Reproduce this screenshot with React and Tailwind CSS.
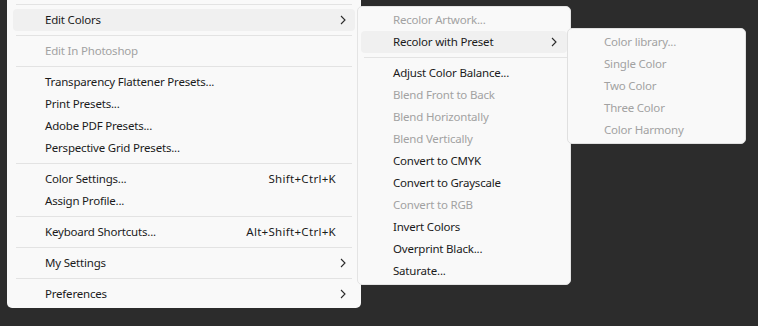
import React from "react";

const mainItems = [
  { sep: true },
  { label: "Edit Colors", sub: true, active: true },
  { sep: true },
  { label: "Edit In Photoshop", disabled: true },
  { sep: true },
  { label: "Transparency Flattener Presets..." },
  { label: "Print Presets..." },
  { label: "Adobe PDF Presets..." },
  { label: "Perspective Grid Presets..." },
  { sep: true },
  { label: "Color Settings...", shortcut: "Shift+Ctrl+K" },
  { label: "Assign Profile..." },
  { sep: true },
  { label: "Keyboard Shortcuts...", shortcut: "Alt+Shift+Ctrl+K" },
  { sep: true },
  { label: "My Settings", sub: true },
  { sep: true },
  { label: "Preferences", sub: true },
];

const colorItems = [
  { label: "Recolor Artwork...", disabled: true },
  { label: "Recolor with Preset", sub: true, active: true },
  { sep: true },
  { label: "Adjust Color Balance..." },
  { label: "Blend Front to Back", disabled: true },
  { label: "Blend Horizontally", disabled: true },
  { label: "Blend Vertically", disabled: true },
  { label: "Convert to CMYK" },
  { label: "Convert to Grayscale" },
  { label: "Convert to RGB", disabled: true },
  { label: "Invert Colors" },
  { label: "Overprint Black..." },
  { label: "Saturate..." },
];

const presetItems = [
  { label: "Color library...", disabled: true },
  { label: "Single Color", disabled: true },
  { label: "Two Color", disabled: true },
  { label: "Three Color", disabled: true },
  { label: "Color Harmony", disabled: true },
];

const Chevron = () => (
  <svg width="6" height="10" viewBox="0 0 6 10" className="shrink-0">
    <polyline points="1,1 5,5 1,9" fill="none" stroke="#2a2a2a" strokeWidth="1.1" />
  </svg>
);

const MenuList = ({ items, indent = "pl-[32px]", right = "pr-[19px]", chevronPad = "pr-[9px]", sepClass = "mx-[3px]" }) => (
  <>
    {items.map((item, i) =>
      item.sep ? (
        <div key={i} className="h-[9px] flex items-center">
          <div className={`h-px flex-1 bg-[#e3e3e3] ${sepClass}`} />
        </div>
      ) : (
        <div
          key={i}
          className={`h-[22px] flex items-center rounded-[4px] ${indent} ${
            item.sub ? chevronPad : right
          } ${item.active ? "bg-[#f0f0f0]" : ""} ${
            item.disabled ? "text-[#a2a2a2]" : "text-[#1b1b1b]"
          }`}
        >
          <span className="flex-1 whitespace-nowrap">{item.label}</span>
          {item.shortcut && (
            <span className="whitespace-nowrap tracking-[0.3px]">{item.shortcut}</span>
          )}
          {item.sub && <Chevron />}
        </div>
      )
    )}
  </>
);

export default function App() {
  return (
    <div
      className="relative w-[758px] h-[326px] overflow-hidden bg-[#2c2c2c] text-[11.5px] tracking-[-0.2px]"
      style={{ fontFamily: '"Noto Sans", "Open Sans", sans-serif' }}
    >
      <div className="ml-[7px] w-[354px] bg-[#f9f9f9] rounded-b-[5px] px-[6px] pb-[3px]">
        <MenuList items={mainItems} />
      </div>

      <div className="absolute left-[357px] top-[6px] w-[214px] bg-[#f9f9f9] rounded-[5px] border border-[#e4e4e4] px-[3px] py-[2px]">
        <MenuList items={colorItems} indent="pl-[32px]" chevronPad="pr-[10px]" sepClass="ml-[3px] mr-0" />
      </div>

      <div className="absolute left-[567px] top-[28px] w-[179px] bg-[#f9f9f9] rounded-[5px] border border-[#e0e0e0] px-[3px] py-[2px]">
        <MenuList items={presetItems} indent="pl-[33px]" />
      </div>
    </div>
  );
}
